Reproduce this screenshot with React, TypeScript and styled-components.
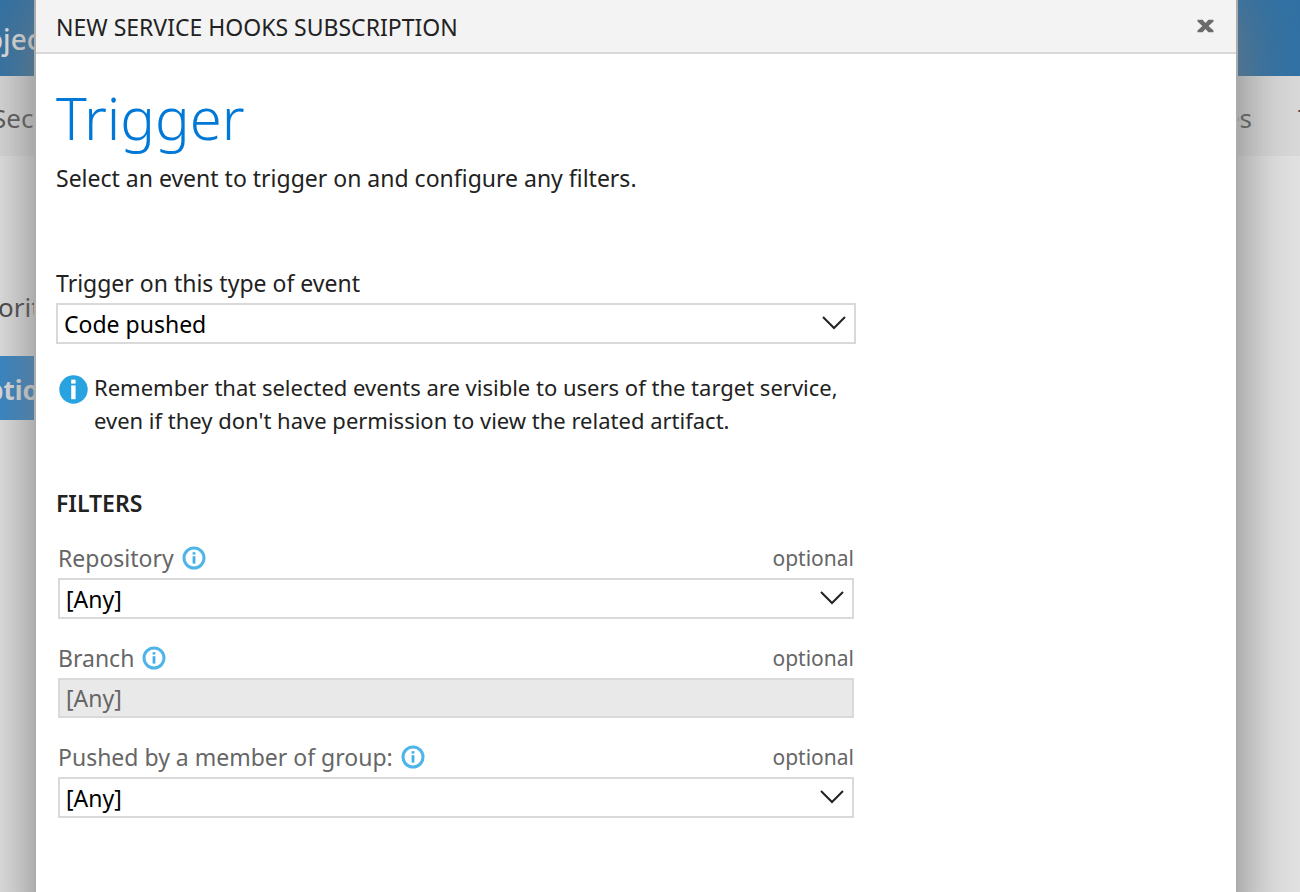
import React from "react";
import styled, { createGlobalStyle } from "styled-components";

const GlobalStyle = createGlobalStyle`
  * { box-sizing: border-box; }
  body {
    margin: 0;
    background: #e3e3e3;
    color: #222;
    font-family: "Noto Sans", "Open Sans", sans-serif;
    font-size: 23px;
    line-height: 32px;
  }
`;

const Screen = styled.div`
  position: relative;
  height: 100vh;
  overflow: hidden;
`;

const Banner = styled.div`
  display: flex;
  align-items: center;
  height: 76px;
  padding-top: 2px;
  background: #3071a4;
  color: #e2e2e2;
  font-size: 28px;
  font-weight: 500;
`;

const NavBar = styled.nav`
  display: flex;
  justify-content: space-between;
  align-items: center;
  height: 80px;
  padding-top: 4px;
  background: #dadada;
  color: #555;
  font-size: 26px;
`;

const NavGroup = styled.div`
  display: flex;
  gap: 46px;
`;

const Clipped = styled.span<{ $shift: number }>`
  margin-left: -${(p) => p.$shift}px;
`;

const EdgeItem = styled.span`
  width: 2px;
`;

const SideList = styled.div`
  display: flex;
  flex-direction: column;
  width: 200px;
  padding-top: 120px;
  font-size: 26px;
  color: #444;
`;

const SideItem = styled.div<{ $selected?: boolean }>`
  display: flex;
  align-items: center;
  height: ${(p) => (p.$selected ? 64 : 80)}px;
  padding: ${(p) => (p.$selected ? "4px 0 0" : "0 0 18px")};
  background: ${(p) => (p.$selected ? "#3385c8" : "transparent")};
  color: ${(p) => (p.$selected ? "#e2e2e2" : "inherit")};
  font-weight: ${(p) => (p.$selected ? 700 : 400)};
`;

const Overlay = styled.div`
  position: absolute;
  inset: 0;
  padding: 0 64px 0 36px;
`;

const Dialog = styled.section`
  min-height: calc(100vh + 60px);
  background: #fff;
  box-shadow: 0 0 0 2px #acacac, 0 0 60px #767676;
`;

const DialogHeader = styled.header`
  display: flex;
  justify-content: space-between;
  align-items: center;
  height: 54px;
  padding: 2px 20px 0;
  background: #f3f3f3;
  border-bottom: 2px solid #d9d9d9;
`;

const DialogTitle = styled.h2`
  margin: 0;
  font-size: 23px;
  font-weight: 400;
`;

const CloseButton = styled.button`
  display: flex;
  padding: 0 2px 2px;
  border: 0;
  background: none;
`;

const DialogBody = styled.div`
  padding: 22px 20px;
`;

const Heading = styled.h1`
  margin: 0;
  color: #0078d7;
  font-size: 58px;
  font-weight: 300;
  line-height: 84px;
`;

const Lead = styled.p`
  margin: 2px 0 0;
`;

const Form = styled.form`
  max-width: 800px;
  margin-top: 73px;
`;

const Label = styled.label`
  display: block;
  height: 36px;
`;

const SelectBox = styled.div`
  position: relative;
  svg {
    position: absolute;
    top: 12px;
    right: 9px;
    pointer-events: none;
  }
`;

const Select = styled.select`
  display: block;
  appearance: none;
  width: 100%;
  height: 41px;
  padding: 0 6px;
  border: 2px solid #d9d9d9;
  border-radius: 0;
  background: #fff;
  color: #000;
  font: inherit;
  opacity: 1;
  &:disabled {
    height: 40px;
    background: #e9e9e9;
    color: #666;
  }
`;

const Note = styled.div`
  display: flex;
  gap: 6px;
  margin-top: 27px;
  padding-left: 3px;
  font-size: 22px;
  svg { flex: none; margin-top: 4px; }
  p { margin: 0; line-height: 33px; }
`;

const SectionTitle = styled.h3`
  margin: 50px 0 21px;
  font-size: 23px;
  font-weight: 600;
  line-height: 32px;
`;

const Filters = styled.div`
  display: flex;
  flex-direction: column;
  gap: 21px;
  padding: 0 2px;
`;

const FilterHead = styled.div`
  display: flex;
  align-items: center;
  height: 38px;
  padding-bottom: 2px;
  color: #666;
  svg { margin-left: 8px; }
`;

const Optional = styled.span`
  margin-left: auto;
  font-size: 21px;
`;

const Chevron = () => (
  <svg width="26" height="16" viewBox="0 0 26 16" fill="none" stroke="#222" strokeWidth="2">
    <path d="M2 2 L13 13 L24 2" />
  </svg>
);

const InfoSolid = () => (
  <svg width="29" height="29" viewBox="0 0 29 29">
    <circle cx="14.5" cy="14.5" r="14.2" fill="#29a3e0" />
    <rect x="12.2" y="4.6" width="4.4" height="4" fill="#fff" />
    <rect x="12.2" y="10.4" width="4.4" height="13.8" fill="#fff" />
  </svg>
);

const InfoRing = () => (
  <svg width="24" height="24" viewBox="0 0 24 24">
    <circle cx="12" cy="12" r="10" fill="none" stroke="#4fb5e8" strokeWidth="3" />
    <rect x="10.6" y="6.2" width="2.8" height="2.4" fill="#3fb0e8" />
    <rect x="10.6" y="10.2" width="2.8" height="7.4" fill="#3fb0e8" />
  </svg>
);

const CloseIcon = () => (
  <svg width="17" height="14" viewBox="0 0 17 14" fill="#6b6b6b">
    <path d="M0.5 0.8 H5.6 L8.5 3.9 L11.4 0.8 H16.5 V2.4 L11.6 7 L16.5 11.6 V13.2 H11.4 L8.5 10.1 L5.6 13.2 H0.5 V11.6 L5.4 7 L0.5 2.4 Z" />
  </svg>
);

type FilterProps = { id: string; label: string; disabled?: boolean };

const Filter = ({ id, label, disabled }: FilterProps) => (
  <div>
    <FilterHead>
      <label htmlFor={id}>{label}</label>
      <InfoRing />
      <Optional>optional</Optional>
    </FilterHead>
    <SelectBox>
      <Select id={id} disabled={disabled}>
        <option>[Any]</option>
      </Select>
      {!disabled && <Chevron />}
    </SelectBox>
  </div>
);

export default function App() {
  return (
    <Screen>
      <GlobalStyle />
      <Banner>
        <Clipped $shift={14}>oject</Clipped>
      </Banner>
      <NavBar>
        <Clipped $shift={8}>Sec</Clipped>
        <NavGroup>
          <span>es</span>
          <EdgeItem>T</EdgeItem>
        </NavGroup>
      </NavBar>
      <SideList>
        <SideItem>
          <Clipped $shift={2}>orit</Clipped>
        </SideItem>
        <SideItem $selected>
          <Clipped $shift={13}>ptio</Clipped>
        </SideItem>
      </SideList>
      <Overlay>
        <Dialog role="dialog" aria-labelledby="dialog-title">
          <DialogHeader>
            <DialogTitle id="dialog-title">NEW SERVICE HOOKS SUBSCRIPTION</DialogTitle>
            <CloseButton type="button" aria-label="Close">
              <CloseIcon />
            </CloseButton>
          </DialogHeader>
          <DialogBody>
            <Heading>Trigger</Heading>
            <Lead>Select an event to trigger on and configure any filters.</Lead>
            <Form>
              <Label htmlFor="event">Trigger on this type of event</Label>
              <SelectBox>
                <Select id="event">
                  <option>Code pushed</option>
                </Select>
                <Chevron />
              </SelectBox>
              <Note>
                <InfoSolid />
                <p>
                  Remember that selected events are visible to users of the target service,
                  even if they don't have permission to view the related artifact.
                </p>
              </Note>
              <SectionTitle>FILTERS</SectionTitle>
              <Filters>
                <Filter id="repository" label="Repository" />
                <Filter id="branch" label="Branch" disabled />
                <Filter id="group" label="Pushed by a member of group:" />
              </Filters>
            </Form>
          </DialogBody>
        </Dialog>
      </Overlay>
    </Screen>
  );
}
